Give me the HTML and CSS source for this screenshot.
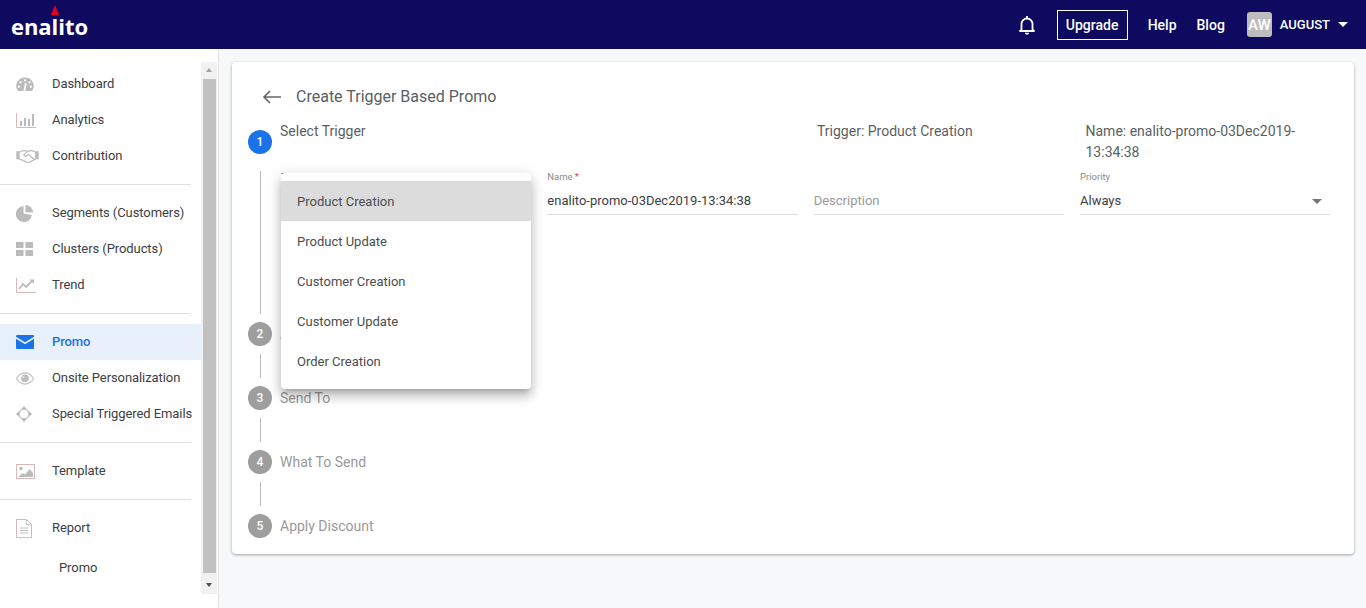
FILE: index.html
```html
<!DOCTYPE html>
<html lang="en">
<head>
<meta charset="utf-8">
<title>Create Trigger Based Promo</title>
<link rel="stylesheet" href="styles.css">
</head>
<body>
<header class="topbar">
  <div class="logo"><span class="logo-mark"></span>enalito</div>
  <nav class="top-actions">
    <svg class="bell" viewBox="0 0 18 20" width="18" height="20"><path d="M3.500 14.500V9a5.500 5.500 0 0 1 11 0v5.500l1.500 1.500H2z" fill="none" stroke="#fff" stroke-width="1.800" stroke-linejoin="round"/><path d="M7 17.800a2 2 0 0 0 4 0z" fill="#fff"/><path d="M9 1v2" stroke="#fff" stroke-width="1.800"/></svg>
    <a class="upgrade">Upgrade</a>
    <a class="top-link">Help</a>
    <a class="top-link">Blog</a>
    <div class="user"><span class="avatar">AW</span><span class="user-name">AUGUST</span><span class="caret"></span></div>
  </nav>
</header>
<div class="shell">
  <aside class="sidebar">
    <div class="side-nav">
      <ul class="group">
        <li class="item"><svg width="18" height="15" viewBox="0 0 20 17"><path d="M10 .5a9.700 9.700 0 0 0-8.400 14.800c.3.500.8.700 1.300.7h14.200c.5 0 1-.2 1.300-.7A9.700 9.700 0 0 0 10 .5z" fill="#bbb"/><path d="M9.200 16l1.800-9" stroke="#fff" stroke-width="2"/><circle cx="5" cy="6" r="1.300" fill="#fff"/><circle cx="10" cy="3.800" r="1.300" fill="#fff"/><circle cx="15" cy="6" r="1.300" fill="#fff"/><circle cx="3.300" cy="11" r="1.300" fill="#fff"/><circle cx="16.700" cy="11" r="1.300" fill="#fff"/></svg><span>Dashboard</span></li>
        <li class="item"><svg width="20" height="15" viewBox="0 0 20 15"><path d="M.5 0v14.500H20" fill="none" stroke="#d8b8b8"/><path d="M4 8h2v5H4zM8 5h2v8H8zM12 6h2v7h-2zM16 1h2v12h-2z" fill="#bbb"/></svg><span>Analytics</span></li>
        <li class="item"><svg width="23" height="14" viewBox="0 0 24 15"><path d="M0 2.500h3V11H0zM21 2.500h3V11h-3z" fill="#bbb"/><path d="M3 3.500l5-2 4 1 4-1 5 2v7l-7.500 4-2-.5L3 10.500z" fill="none" stroke="#bbb" stroke-width="1.300"/><path d="M12 2.500L8 6.500l2 1.500 3-2 6 5" fill="none" stroke="#bbb" stroke-width="1.300"/></svg><span>Contribution</span></li>
      </ul>
      <ul class="group">
        <li class="item"><svg width="17" height="17" viewBox="0 0 18 18"><path d="M8 1a8.500 8.500 0 1 0 8.800 9.500L8 9z" fill="#bbb"/><path d="M10 0a8 8 0 0 1 8 8l-8-.2z" fill="#bbb"/></svg><span>Segments (Customers)</span></li>
        <li class="item"><svg width="17" height="14" viewBox="0 0 17 14"><path d="M0 0h7.500v6H0zM9.500 0H17v6H9.500zM0 8h7.500v6H0zM9.500 8H17v6H9.500z" fill="#bbb"/></svg><span>Clusters (Products)</span></li>
        <li class="item"><svg width="20" height="15" viewBox="0 0 20 15"><path d="M.5 0v14.500H20" fill="none" stroke="#d8b8b8"/><path d="M3 11l4-5 3 3 6-6" fill="none" stroke="#bbb" stroke-width="1.800"/><path d="M13.500 1.500H18V6z" fill="#bbb"/></svg><span>Trend</span></li>
      </ul>
      <ul class="group">
        <li class="item active"><svg width="18" height="14" viewBox="0 0 18 14"><path d="M1 0h16a1 1 0 0 1 1 1v.8L9 7.300 0 1.800V1a1 1 0 0 1 1-1z" fill="#1a73e8"/><path d="M0 3.800l9 5.500 9-5.500V13a1 1 0 0 1-1 1H1a1 1 0 0 1-1-1z" fill="#1a73e8"/></svg><span>Promo</span></li>
        <li class="item"><svg width="18" height="13" viewBox="0 0 18 13"><path d="M.5 6.500C2.500 2.800 5.300 1 9 1s6.500 1.800 8.500 5.500C15.500 10.200 12.700 12 9 12S2.500 10.200.5 6.500z" fill="none" stroke="#c8c8c8" stroke-width="1.300"/><circle cx="9" cy="6.300" r="3.800" fill="#bbb"/><circle cx="7.500" cy="5" r="1" fill="#eee"/></svg><span>Onsite Personalization</span></li>
        <li class="item"><svg width="16" height="16" viewBox="0 0 16 16"><circle cx="8" cy="8" r="5" fill="none" stroke="#ccc" stroke-width="1.500"/><path d="M8 0l2.500 3.200h-5zM8 16l-2.500-3.200h5zM0 8l3.200-2.500v5zM16 8l-3.200 2.500v-5z" fill="#b4b4b4"/></svg><span>Special Triggered Emails</span></li>
      </ul>
      <ul class="group">
        <li class="item"><svg width="19" height="15" viewBox="0 0 19 15"><rect x=".5" y=".5" width="18" height="14" fill="none" stroke="#d8b8b8"/><circle cx="5" cy="4.500" r="1.800" fill="#bbb"/><path d="M2 13l5-4 2 1.500 4.500-5.500L17 9v4z" fill="#bbb"/></svg><span>Template</span></li>
      </ul>
      <ul class="group last">
        <li class="item"><svg width="16" height="19" viewBox="0 0 16 19"><path d="M.5.500h10l5 5v13H.5z" fill="none" stroke="#d8b8b8"/><path d="M10.500.500v5h5" fill="none" stroke="#c8c8c8"/><path d="M4 9h8M4 11.500h8M4 14h8" stroke="#bbb"/></svg><span>Report</span></li>
        <li class="item sub"><span>Promo</span></li>
      </ul>
    </div>
    <div class="scrollbar">
      <span class="arrow up"></span>
      <span class="thumb"></span>
      <span class="arrow down"></span>
    </div>
  </aside>
  <main class="content">
    <section class="card">
      <div class="title-row">
        <svg class="back" viewBox="0 0 20 14" width="20" height="14"><path d="M19 7H2M8 1L2 7l6 6" fill="none" stroke="#666" stroke-width="1.600"/></svg>
        <h1>Create Trigger Based Promo</h1>
      </div>
      <div class="stepper">
        <div class="step-head first">
          <span class="num on">1</span>
          <span class="step-label dark">Select Trigger</span>
          <span class="summary trig">Trigger: Product Creation</span>
          <span class="summary nm">Name: enalito-promo-03Dec2019-13:34:38</span>
        </div>
        <div class="step-body">
          <div class="form">
            <div class="field">
              <label class="lab blue">Trigger</label>
            </div>
            <div class="field">
              <label class="lab">Name<i>*</i></label>
              <div class="val">enalito-promo-03Dec2019-13:34:38</div>
            </div>
            <div class="field">
              <label class="lab"></label>
              <div class="val ph">Description</div>
            </div>
            <div class="field">
              <label class="lab">Priority</label>
              <div class="val sel">Always<span class="sel-caret"></span></div>
            </div>
          </div>
          <ul class="menu">
            <li class="sel-item">Product Creation</li>
            <li>Product Update</li>
            <li>Customer Creation</li>
            <li>Customer Update</li>
            <li>Order Creation</li>
          </ul>
        </div>
        <div class="step-head"><span class="num">2</span><span class="step-label">Audience</span></div>
        <div class="conn"></div>
        <div class="step-head"><span class="num">3</span><span class="step-label">Send To</span></div>
        <div class="conn"></div>
        <div class="step-head"><span class="num">4</span><span class="step-label">What To Send</span></div>
        <div class="conn"></div>
        <div class="step-head"><span class="num">5</span><span class="step-label">Apply Discount</span></div>
      </div>
    </section>
  </main>
</div>
</body>
</html>
```
FILE: styles.css
```css
* { box-sizing: border-box; }
html, body { margin: 0; height: 100%; overflow: hidden; }
body { font-family: Roboto, "Liberation Sans", sans-serif; font-size: 13px; color: #3c4043; background: #f6f8fa; }
ul { list-style: none; margin: 0; padding: 0; }

.topbar { height: 49px; background: #0d0a5f; display: flex; align-items: center; justify-content: space-between; padding: 0 18px 0 11px; color: #fff; }
.logo { position: relative; font-family: "Open Sans", sans-serif; font-weight: 700; font-size: 22px; letter-spacing: -.05px; line-height: 49px; padding-top: 4px; }
.logo-mark { position: absolute; left: 40px; top: 7px; width: 0; height: 0; border-left: 4.500px solid transparent; border-right: 4.500px solid transparent; border-bottom: 10px solid #e8001c; }
.top-actions { display: flex; align-items: center; font-size: 14px; font-weight: 500; }
.bell { margin-right: 21px; }
.upgrade { border: 1px solid #fff; height: 30px; width: 71px; display: flex; align-items: center; justify-content: center; margin-right: 20px; }
.top-link { margin-right: 20px; }
.top-link + .user { margin-left: 2px; }
.user { display: flex; align-items: center; }
.avatar { width: 25px; height: 25px; border-radius: 3px; background: #bdbdbd; display: flex; align-items: center; justify-content: center; font-size: 15px; margin-right: 8px; }
.user-name { font-size: 13px; }
.caret { margin-left: 8px; width: 0; height: 0; border-left: 5px solid transparent; border-right: 5px solid transparent; border-top: 5px solid #fff; }

.shell { display: flex; height: 559px; }
.sidebar { width: 219px; background: #fff; border-right: 1px solid #e4e4e4; display: flex; flex: none; }
.side-nav { width: 201px; flex: none; padding-top: 17px; }
.group { width: 191px; border-bottom: 1px solid #e0e0e0; padding-bottom: 10px; margin-bottom: 10px; }
.group.last { border-bottom: 0; }
.item { display: grid; grid-template-columns: 36px 1fr; align-items: center; height: 36px; width: 201px; padding-left: 16px; color: #3c4043; white-space: nowrap; letter-spacing: -.08px; }
.item span { margin-bottom: 2px; }
.item.active { color: #1a73e8; font-weight: 500; background: #e8f0fb; }
.item.sub { grid-template-columns: 1fr; padding-left: 59px; margin-top: 4px; }

.scrollbar { width: 16px; margin: 13px 0 14px; padding: 0 1px 0 2px; background: #f1f1f1; display: flex; flex-direction: column; flex: none; }
.thumb { flex: 1; width: 100%; background: #c1c1c1; }
.arrow { width: 100%; position: relative; flex: none; }
.arrow.up { height: 17px; }
.arrow.down { height: 21px; }
.arrow::after { content: ""; position: absolute; left: 3px; border-left: 3.500px solid transparent; border-right: 3.500px solid transparent; }
.arrow.up::after { top: 6px; border-bottom: 4px solid #a3a3a3; }
.arrow.down::after { top: 10px; border-top: 4px solid #505050; }

.content { flex: 1; padding: 13px 12px 0 13px; min-width: 0; }
.card { height: 492px; background: #fff; border-radius: 4px; box-shadow: 0 1px 3px rgba(0,0,0,.35); padding: 17px 24px 0 16px; }
.title-row { display: flex; align-items: center; height: 34px; padding-left: 14px; }
.back { margin: 2px 14px 0 0; }
h1 { margin: 0; font-size: 16px; font-weight: 400; color: #5a5f63; }

.stepper { margin-top: 5px; }
.step-head { position: relative; display: flex; align-items: center; height: 24px; }
.step-head.first { align-items: flex-start; height: 48px; }
.num { width: 24px; height: 24px; border-radius: 50%; background: #9e9e9e; color: #fff; font-size: 12px; font-weight: 500; display: flex; align-items: center; justify-content: center; flex: none; }
.num.on { background: #1a73e8; margin-top: 12px; }
.step-label { margin-left: 8px; font-size: 14px; color: #9a9a9a; }
.step-label.dark { color: #5a5f63; line-height: 22px; margin-top: 2px; }
.summary { position: absolute; top: 3px; font-size: 14px; line-height: 21px; color: #5a5f63; }
.summary.trig { left: 569px; }
.summary.nm { left: 837.500px; width: 232px; }

.step-body { position: relative; margin-left: 12px; border-left: 1px solid #bdbdbd; height: 143px; margin-bottom: 8px; padding-left: 20px; margin-top: 5px; }
.form { display: grid; grid-template-columns: repeat(4, 250.330px); column-gap: 16px; }
.field { height: 44px; border-bottom: 1px solid #dcdcdc; }
.lab { display: block; height: 22px; font-size: 9.500px; line-height: 11px; color: #8a8a8a; }
.lab i { font-style: normal; color: #e53935; margin-left: 2px; }
.lab.blue { color: #1a73e8; }
.val { font-size: 13px; line-height: 15px; height: 21px; color: #3c4043; position: relative; }
.val.ph { color: #9a9a9a; }
.sel-caret { position: absolute; right: 8px; top: 6px; border-left: 5px solid transparent; border-right: 5px solid transparent; border-top: 5px solid #757575; }

.menu { position: absolute; left: 20px; top: 2px; width: 250px; height: 216px; padding: 8px 0; background: #fff; border-radius: 4px; box-shadow: 0 5px 5px -3px rgba(0,0,0,.2), 0 8px 10px 1px rgba(0,0,0,.14), 0 3px 14px 2px rgba(0,0,0,.12); z-index: 5; }
.menu li { height: 40px; line-height: 42px; padding-left: 16px; color: #4a4d50; }
.menu li.sel-item { background: #dcdcdc; }

.conn { width: 1px; height: 24px; margin: 8px 0 8px 12px; background: #bdbdbd; }
```
